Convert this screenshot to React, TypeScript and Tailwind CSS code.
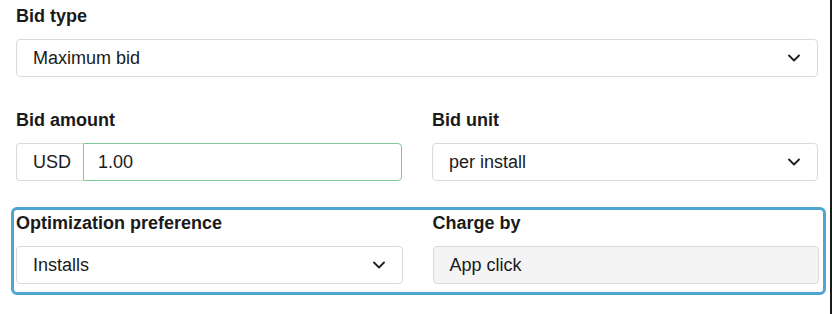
import React from 'react'

const Chevron = () => (
  <svg width="12" height="8" viewBox="0 0 12 8" fill="none" className="shrink-0">
    <path d="M1 1.5l5 5 5-5" stroke="#1f1f1f" strokeWidth="1.8" strokeLinecap="round" strokeLinejoin="round" />
  </svg>
)

function Label({ children }: { children: React.ReactNode }) {
  return <div className="h-6 leading-6 text-[18px] font-bold text-[#1a1a1a] mb-[11px]">{children}</div>
}

function Select({ value }: { value: string }) {
  return (
    <div className="h-[38px] flex items-center justify-between pl-4 pr-[17px] bg-white border border-[#dadada] rounded-[4px] text-[18px] text-[#1a1a1a]">
      <span>{value}</span>
      <Chevron />
    </div>
  )
}

export default function App() {
  return (
    <div className="w-[832px] h-[314px] bg-white flex font-['Liberation_Sans',Arial,sans-serif] overflow-hidden">
      <div className="flex-1 pt-[4px]">
        <div className="pl-4 pr-3">
          <Label>Bid type</Label>
          <Select value="Maximum bid" />
        </div>

        <div className="pl-4 pr-3 mt-[31px] grid grid-cols-2 gap-[30px]">
          <div>
            <Label>Bid amount</Label>
            <div className="flex h-[38px] text-[18px] text-[#1a1a1a]">
              <div className="w-[67px] flex items-center pl-4 border border-r-0 border-[#dadada] rounded-l-[4px] bg-white">USD</div>
              <div className="flex-1 flex items-center pl-[14px] border border-solid border-[rgb(126,200,156)] rounded-r-[4px] bg-white">1.00</div>
            </div>
          </div>
          <div>
            <Label>Bid unit</Label>
            <Select value="per install" />
          </div>
        </div>

        <div className="ml-[11px] mr-1 mt-[26px] border-[3px] border-[#4fa5d1] rounded-[6px] pl-[2px] pr-1 pt-[1px] pb-[8px] grid grid-cols-2 gap-[30px]">
          <div>
            <Label>Optimization preference</Label>
            <Select value="Installs" />
          </div>
          <div>
            <Label>Charge by</Label>
            <div className="h-[38px] flex items-center pl-4 bg-[#f4f4f4] border border-[#dadada] rounded-[4px] text-[18px] text-[#1a1a1a]">
              App click
            </div>
          </div>
        </div>
      </div>
      <div className="w-[2px] bg-[#1a1a1a]" />
    </div>
  )
}
